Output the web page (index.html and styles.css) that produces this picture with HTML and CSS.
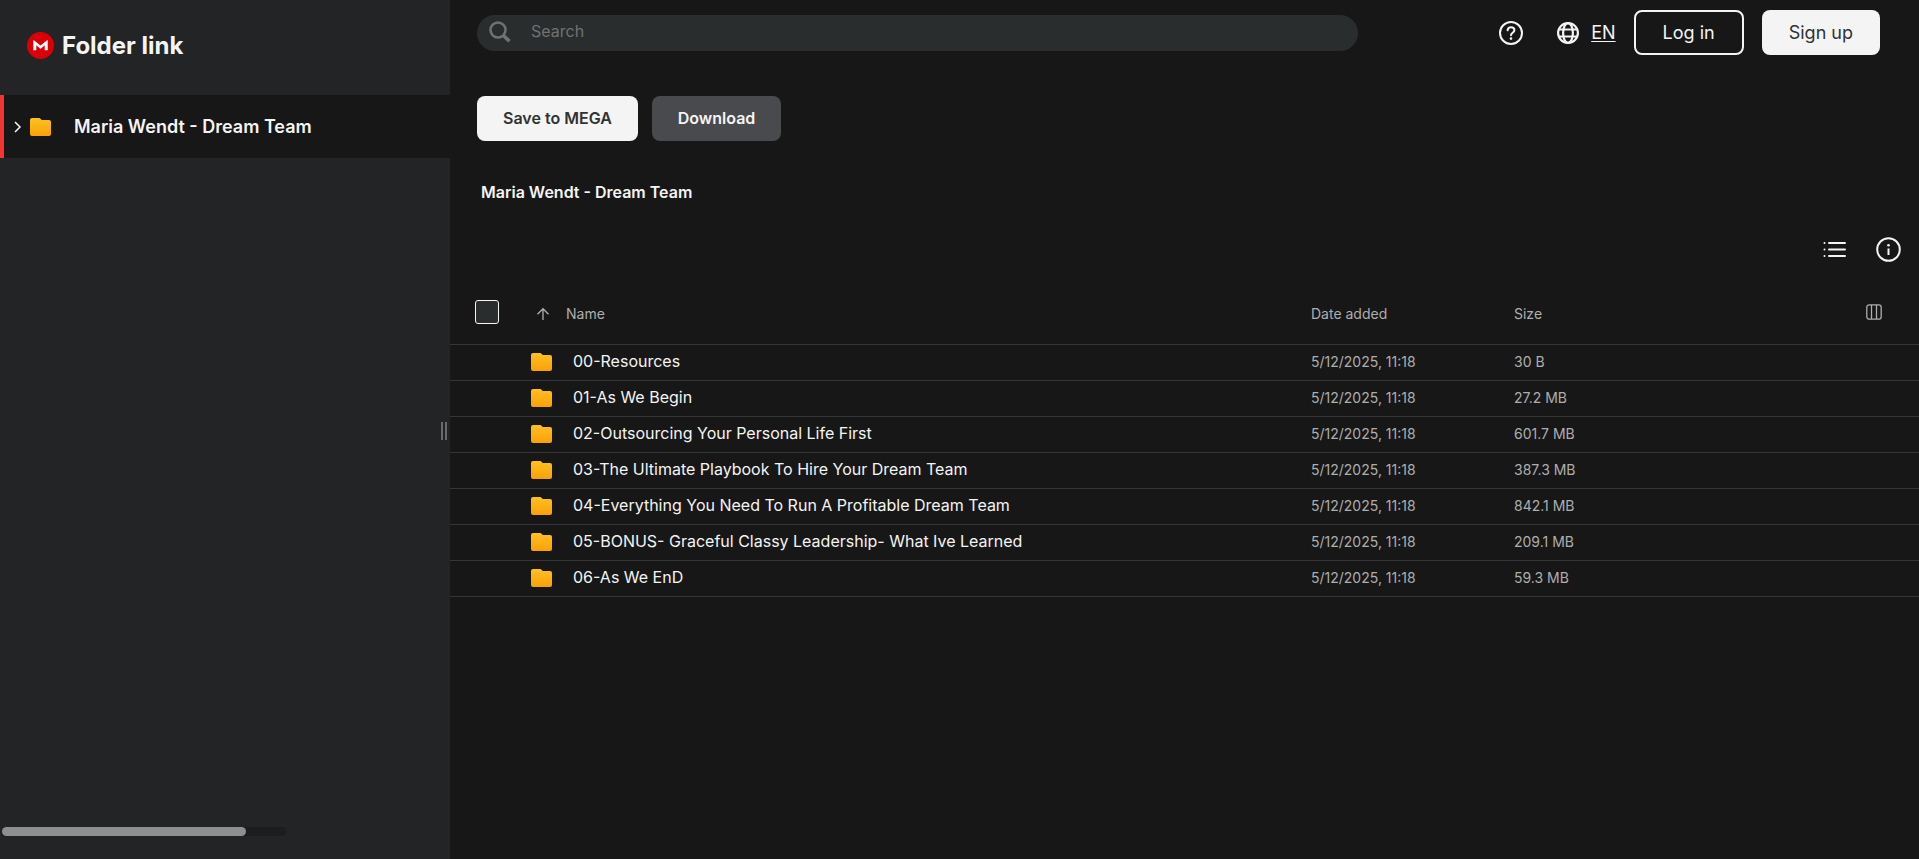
FILE: index.html
```
<!DOCTYPE html>
<html lang="en">
<head>
<meta charset="utf-8">
<meta name="viewport" content="width=device-width, initial-scale=1">
<title>Maria Wendt - Dream Team</title>
<link rel="stylesheet" href="styles.css">
</head>
<body>
<svg class="defs" width="0" height="0" aria-hidden="true">
  <defs>
    <linearGradient id="amber" x1="0" y1="0" x2="0" y2="1">
      <stop offset="0" stop-color="#ffc024"/>
      <stop offset="1" stop-color="#f9a109"/>
    </linearGradient>
    <symbol id="folder" viewBox="0 0 21 18">
      <path fill="url(#amber)" d="M2 0h7c.8 0 1.200.3 1.700.9.600.8 1 1.100 1.800 1.100H19a2 2 0 0 1 2 2v12a2 2 0 0 1-2 2H2a2 2 0 0 1-2-2V2a2 2 0 0 1 2-2z"/>
    </symbol>
  </defs>
</svg>
<div class="app">
  <aside class="sidebar">
    <a class="brand" href="#">
      <svg width="27" height="27" viewBox="0 0 27 27" aria-hidden="true">
        <circle cx="13.500" cy="13.500" r="13.500" fill="#d90007"/>
        <path fill="#fff" d="M6.300 18.200V8.400c0-.3.300-.5.600-.2l6.600 5.400 6.600-5.400c.3-.3.600-.1.600.2v9.800h-3v-4.900l-3.700 3.100c-.3.300-.7.300-1 0l-3.700-3.100v4.900z"/>
      </svg>
      <span>Folder link</span>
    </a>
    <nav class="tree">
      <a class="tree-item" href="#">
        <svg class="chevron" width="8" height="12" viewBox="0 0 8 12" fill="none" stroke="#f4f4f4" stroke-width="1.500" aria-hidden="true"><path d="M1 1l5 5-5 5"/></svg>
        <svg class="folder" aria-hidden="true"><use href="#folder"/></svg>
        <span>Maria Wendt - Dream Team</span>
      </a>
    </nav>
    <div class="scroll-track"><div class="scroll-thumb"></div></div>
    <div class="resizer"></div>
  </aside>
  <main class="main">
    <header class="topbar">
      <label class="search">
        <svg width="22" height="22" viewBox="0 0 22 22" fill="none" stroke="#707272" aria-label="Search">
          <circle cx="9" cy="9" r="7.500" stroke-width="2.500"/>
          <path d="M14.200 14.200l6.200 6" stroke-width="3.600"/>
        </svg>
        <input type="search" placeholder="Search" aria-label="Search">
      </label>
      <div class="actions">
        <button class="icon-btn" aria-label="Help">
          <svg width="24" height="24" viewBox="0 0 24 24" fill="none" stroke="#f4f4f4" stroke-width="2" stroke-linecap="round">
            <circle cx="12" cy="12" r="11"/>
            <path d="M8.600 9.300c.2-1.900 1.600-3 3.400-3 1.900 0 3.400 1.200 3.400 2.900 0 2.500-3.400 2.700-3.400 5"/>
            <circle cx="12" cy="17.600" r="1.300" fill="#f4f4f4" stroke="none"/>
          </svg>
        </button>
        <button class="language">
          <svg width="22" height="22" viewBox="0 0 22 22" fill="none" stroke="#f4f4f4" stroke-width="2.200" aria-hidden="true">
            <circle cx="11" cy="11" r="9.900"/>
            <ellipse cx="11" cy="11" rx="4.900" ry="9.900"/>
            <path d="M2 7.500h18M2 14.500h18" stroke-width="2"/>
          </svg>
          <span>EN</span>
        </button>
        <button class="btn outline">Log in</button>
        <button class="btn light">Sign up</button>
      </div>
    </header>
    <div class="toolbar">
      <button class="btn light strong">Save to MEGA</button>
      <button class="btn grey strong">Download</button>
    </div>
    <h1 class="title">Maria Wendt - Dream Team</h1>
    <div class="view-bar">
      <button class="icon-btn" aria-label="List view">
        <svg width="24" height="18" viewBox="0 0 24 18" stroke="#f4f4f4" stroke-width="2" stroke-linecap="round">
          <path d="M6 2h16M6 8.500h16M6 15h16"/><path d="M1.500 2h.01M1.500 8.500h.01M1.500 15h.01"/>
        </svg>
      </button>
      <button class="icon-btn" aria-label="Info">
        <svg width="25" height="25" viewBox="0 0 25 25" fill="none" stroke="#f4f4f4" stroke-width="2">
          <circle cx="12.500" cy="12.500" r="11.300"/>
          <path d="M12.500 11.500V18"/><circle cx="12.500" cy="8.200" r="1.300" fill="#f4f4f4" stroke="none"/>
        </svg>
      </button>
    </div>
    <table class="files">
      <colgroup><col class="c-check"><col><col class="c-date"><col class="c-size"><col class="c-menu"></colgroup>
      <thead>
        <tr>
          <th><input type="checkbox" aria-label="Select all"></th>
          <th><button class="sort">
            <svg width="14" height="14" viewBox="0 0 14 14" fill="none" stroke="#aeaeae" stroke-width="1.300" aria-hidden="true"><path d="M7 13V2M1.500 7.200L7 1.700l5.500 5.500"/></svg>
            Name</button></th>
          <th>Date added</th>
          <th>Size</th>
          <th><button class="icon-btn columns" aria-label="Columns">
            <svg width="16" height="16" viewBox="0 0 16 16" fill="none" stroke="#aeaeae" stroke-width="1.300"><rect x=".8" y=".8" width="14.400" height="14.400" rx="2.500"/><path d="M5.500 1v14M10.500 1v14"/></svg>
          </button></th>
        </tr>
      </thead>
      <tbody>
        <tr><td></td><td><a class="name" href="#"><svg class="folder" aria-hidden="true"><use href="#folder"/></svg><span>00-Resources</span></a></td><td>5/12/2025, 11:18</td><td>30 B</td><td></td></tr>
        <tr><td></td><td><a class="name" href="#"><svg class="folder" aria-hidden="true"><use href="#folder"/></svg><span>01-As We Begin</span></a></td><td>5/12/2025, 11:18</td><td>27.2 MB</td><td></td></tr>
        <tr><td></td><td><a class="name" href="#"><svg class="folder" aria-hidden="true"><use href="#folder"/></svg><span>02-Outsourcing Your Personal Life First</span></a></td><td>5/12/2025, 11:18</td><td>601.7 MB</td><td></td></tr>
        <tr><td></td><td><a class="name" href="#"><svg class="folder" aria-hidden="true"><use href="#folder"/></svg><span>03-The Ultimate Playbook To Hire Your Dream Team</span></a></td><td>5/12/2025, 11:18</td><td>387.3 MB</td><td></td></tr>
        <tr><td></td><td><a class="name" href="#"><svg class="folder" aria-hidden="true"><use href="#folder"/></svg><span>04-Everything You Need To Run A Profitable Dream Team</span></a></td><td>5/12/2025, 11:18</td><td>842.1 MB</td><td></td></tr>
        <tr><td></td><td><a class="name" href="#"><svg class="folder" aria-hidden="true"><use href="#folder"/></svg><span>05-BONUS- Graceful Classy Leadership- What Ive Learned</span></a></td><td>5/12/2025, 11:18</td><td>209.1 MB</td><td></td></tr>
        <tr><td></td><td><a class="name" href="#"><svg class="folder" aria-hidden="true"><use href="#folder"/></svg><span>06-As We EnD</span></a></td><td>5/12/2025, 11:18</td><td>59.3 MB</td><td></td></tr>
      </tbody>
    </table>
  </main>
</div>
</body>
</html>
```

FILE: styles.css
```
* { box-sizing: border-box; }

body {
  margin: 0;
  background: #171717;
  color: #f4f4f4;
  font: 16px/20px Inter, "Liberation Sans", sans-serif;
}

a { color: inherit; text-decoration: none; }

button {
  font: inherit;
  color: inherit;
  background: none;
  border: 0;
  padding: 0;
  cursor: pointer;
}

svg { display: block; flex: none; }

.defs { position: absolute; }

.app { display: flex; min-height: 100vh; }

/* Sidebar */
.sidebar {
  position: relative;
  flex: none;
  width: 450px;
  display: flex;
  flex-direction: column;
  background: #222425;
}

.brand {
  display: flex;
  align-items: center;
  gap: 8px;
  padding: 32px 27px 36px;
  font-size: 24px;
  line-height: 27px;
  font-weight: 700;
}

.tree { flex: 1; }

.tree-item {
  display: flex;
  align-items: center;
  height: 63px;
  padding-left: 10px;
  border-left: 4px solid #f23433;
  background: #171717;
  font-size: 18px;
  font-weight: 600;
}

.chevron { margin-right: 8px; }

.folder { width: 21px; height: 18px; }

.tree-item .folder { margin-right: 23px; }

.scroll-track {
  width: 284px;
  height: 9px;
  margin: 0 0 23px 2px;
  border-radius: 5px;
  background: #1c1d1e;
}

.scroll-thumb {
  width: 86%;
  height: 9px;
  border-radius: 5px;
  background: #8f8f8f;
}

.resizer {
  position: absolute;
  right: 3px;
  top: calc(50% - 8px);
  width: 6px;
  height: 18px;
  border: solid #6a6b6c;
  border-width: 0 2px;
}

/* Main area */
.main { flex: 1; min-width: 0; }

.topbar {
  display: flex;
  align-items: center;
  justify-content: space-between;
  padding: 10px 39px 0 27px;
}

.search {
  flex: 0 1 881px;
  display: flex;
  align-items: center;
  height: 36px;
  padding: 0 12px 2px;
  gap: 20px;
  border-radius: 18px;
  background: #2a2d2e;
}

.search input {
  flex: 1;
  min-width: 0;
  height: 32px;
  padding: 0 0 2px;
  border: 0;
  outline: 0;
  background: none;
  color: #f4f4f4;
  font: inherit;
}

.search input::placeholder { color: #707272; opacity: 1; }

.actions { display: flex; align-items: center; font-size: 18px; }

.icon-btn { display: block; }

.language {
  display: flex;
  align-items: center;
  gap: 12px;
  margin: 0 18px 0 34px;
}

.language span { text-decoration: underline; text-underline-offset: 2px; }

.btn {
  height: 45px;
  padding: 0 27px;
  border-radius: 8px;
  white-space: nowrap;
}

.outline { border: 2px solid #f4f4f4; margin-right: 18px; }
.light { background: #f4f4f4; color: #303233; }
.grey { background: #494a4d; }
.strong { padding: 0 26px 2px; font-weight: 600; }

.toolbar { display: flex; gap: 14px; padding: 41px 27px 0; }

.title {
  margin: 41px 31px 0;
  font-size: 16px;
  font-weight: 600;
}

.view-bar {
  display: flex;
  justify-content: flex-end;
  align-items: center;
  gap: 29px;
  padding: 35px 18px 0;
}

/* File table */
.files {
  width: 100%;
  margin-top: 5px;
  border-collapse: collapse;
  table-layout: fixed;
  font-size: 14px;
  color: #aeaeae;
}

.c-check { width: 81px; }
.c-date { width: 203px; }
.c-size { width: 352px; }
.c-menu { width: 53px; }

.files th, .files td {
  height: 36px;
  padding: 0;
  border-bottom: 1px solid #333536;
  text-align: left;
  font-weight: 400;
}

.files th { height: 77px; padding-bottom: 20px; vertical-align: bottom; }

.files input {
  appearance: none;
  display: block;
  width: 24px;
  height: 24px;
  margin: 0 0 0 25px;
  border: 1px solid #f4f4f4;
  border-radius: 3px;
  background: #2a2d2e;
}

.sort { display: flex; align-items: center; gap: 16px; padding-left: 5px; }

.columns { padding-bottom: 4px; }

.name {
  display: flex;
  align-items: center;
  gap: 21px;
  color: #f4f4f4;
  font-size: 16px;
}

.name span { padding-bottom: 2px; }
```
